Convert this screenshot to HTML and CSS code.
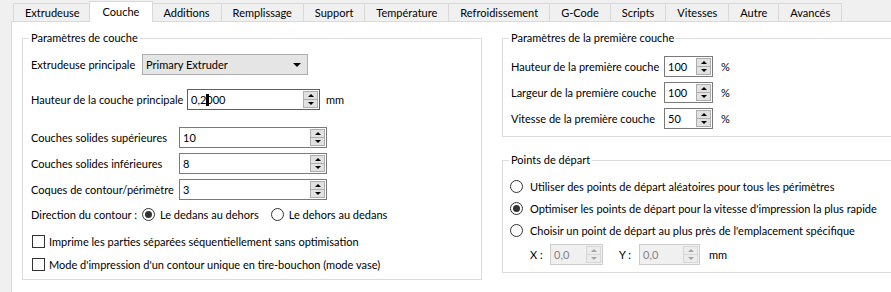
FILE: index.html
```html
<!DOCTYPE html>
<html lang="fr">
<head>
	<meta charset="UTF-8">
	<meta name="viewport" content="width=device-width, initial-scale=1.0">
	<title>Couche</title>
	<link rel="stylesheet" href="styles.css">
</head>
<body>
	<div class="tabs">
		<div class="tab">Extrudeuse</div>
		<div class="tab active">Couche</div>
		<div class="tab">Additions</div>
		<div class="tab">Remplissage</div>
		<div class="tab">Support</div>
		<div class="tab">Température</div>
		<div class="tab">Refroidissement</div>
		<div class="tab">G-Code</div>
		<div class="tab">Scripts</div>
		<div class="tab">Vitesses</div>
		<div class="tab">Autre</div>
		<div class="tab last">Avancés</div>
	</div>

	<div class="pane">
		<fieldset class="group group-main">
			<legend>Paramètres de couche</legend>

			<div class="row row-combo">
				<span class="lbl lbl-short">Extrudeuse principale</span>
				<div class="combo">
					<span class="combo-text">Primary Extruder</span>
					<span class="combo-arrow"></span>
				</div>
			</div>

			<div class="row row-height">
				<span class="lbl lbl-height">Hauteur de la couche principale</span>
				<div class="spin spin-height focus">
					<span class="val">0,2<span class="caret"></span>000</span>
					<span class="spin-btn"><i class="up"></i><i class="dn"></i></span>
				</div>
				<span class="unit">mm</span>
			</div>

			<div class="form-grid">
				<span class="lbl">Couches solides supérieures</span>
				<div class="spin spin-wide">
					<span class="val">10</span>
					<span class="spin-btn"><i class="up"></i><i class="dn"></i></span>
				</div>
				<span class="lbl">Couches solides inférieures</span>
				<div class="spin spin-wide">
					<span class="val">8</span>
					<span class="spin-btn"><i class="up"></i><i class="dn"></i></span>
				</div>
				<span class="lbl">Coques de contour/périmètre</span>
				<div class="spin spin-wide">
					<span class="val">3</span>
					<span class="spin-btn"><i class="up"></i><i class="dn"></i></span>
				</div>
			</div>

			<div class="row row-dir">
				<span class="lbl lbl-short">Direction du contour :</span>
				<span class="radio checked"><span class="dot"></span>Le dedans au dehors</span>
				<span class="radio radio-second"><span class="dot"></span>Le dehors au dedans</span>
			</div>

			<div class="row check check-first"><span class="box"></span>Imprime les parties séparées séquentiellement sans optimisation</div>
			<div class="row check"><span class="box"></span>Mode d'impression d'un contour unique en tire-bouchon (mode vase)</div>
		</fieldset>

		<div class="col-right">
			<fieldset class="group group-first">
				<legend>Paramètres de la première couche</legend>
				<div class="first-grid">
					<span class="lbl">Hauteur de la première couche</span>
					<div class="spin spin-small">
						<span class="val">100</span>
						<span class="spin-btn"><i class="up"></i><i class="dn"></i></span>
					</div>
					<span class="unit">%</span>

					<span class="lbl">Largeur de la première couche</span>
					<div class="spin spin-small">
						<span class="val">100</span>
						<span class="spin-btn"><i class="up"></i><i class="dn"></i></span>
					</div>
					<span class="unit">%</span>

					<span class="lbl">Vitesse de la première couche</span>
					<div class="spin spin-small">
						<span class="val">50</span>
						<span class="spin-btn"><i class="up"></i><i class="dn"></i></span>
					</div>
					<span class="unit">%</span>
				</div>
			</fieldset>

			<fieldset class="group group-start">
				<legend>Points de départ</legend>
				<div class="row radio-row first"><span class="radio"><span class="dot"></span>Utiliser des points de départ aléatoires pour tous les périmètres</span></div>
				<div class="row radio-row"><span class="radio checked"><span class="dot"></span>Optimiser les points de départ pour la vitesse d'impression la plus rapide</span></div>
				<div class="row radio-row"><span class="radio"><span class="dot"></span>Choisir un point de départ au plus près de l'emplacement spécifique</span></div>
				<div class="row xy-row">
					<span class="xy-lbl">X :</span>
					<div class="spin spin-x disabled">
						<span class="val">0,0</span>
						<span class="spin-btn"><i class="up"></i><i class="dn"></i></span>
					</div>
					<span class="xy-lbl xy-y">Y :</span>
					<div class="spin spin-y disabled">
						<span class="val">0,0</span>
						<span class="spin-btn"><i class="up"></i><i class="dn"></i></span>
					</div>
					<span class="unit">mm</span>
				</div>
			</fieldset>
		</div>
	</div>
</body>
</html>
```

FILE: styles.css
```css
body{
	margin: 0;
	background-color: #f0f0f0;
	font-family: Lato, "Segoe UI", sans-serif;
	font-size: 11px;
	color: #000;
	overflow: hidden;
	width: 891px;
	height: 292px;
}

/* tab bar */
.tabs{
	display: flex;
	align-items: flex-end;
	height: 21px;
	padding-left: 13px;
}
.tab{
	height: 17px;
	line-height: 17px;
	padding: 0 11px;
	border: 1px solid #d9d9d9;
	border-bottom: none;
	border-right: none;
	background-color: #f0f0f0;
	white-space: nowrap;
}
.tab.last{
	border-right: 1px solid #d9d9d9;
}
.tab.active{
	position: relative;
	z-index: 1;
	height: 20px;
	line-height: 19px;
	padding: 0 13px;
	margin: 0 -2px -1px;
	border-right: 1px solid #d9d9d9;
	background-color: #fff;
}

/* page */
.pane{
	display: flex;
	gap: 20px;
	margin-left: 11px;
	height: 271px;
	padding: 8px 0 0 10px;
	box-sizing: border-box;
	border-top: 1px solid #d9d9d9;
	border-left: 1px solid #d9d9d9;
	background-color: #fff;
	overflow: hidden;
}

.group{
	margin: 0;
	padding: 0 8px;
	border: 1px solid #dcdcdc;
	box-sizing: border-box;
	min-width: 0;
}
.group legend{
	line-height: 16px;
	padding: 0 2px;
	margin-left: -2px;
}
.group-main{
	width: 460px;
	flex: none;
	align-self: flex-start;
	padding-bottom: 4px;
}
.col-right{
	width: 400px;
	flex: none;
}

.row{
	display: flex;
	align-items: center;
	height: 21px;
	white-space: nowrap;
}
.lbl{
	white-space: nowrap;
}
.lbl-short{
	width: 111px;
	flex: none;
}
.lbl-height{
	width: 156px;
	flex: none;
}
.unit{
	margin-left: 6px;
}

.row-combo{
	margin-top: 8px;
}
.row-height{
	margin-top: 14px;
}

/* combo box */
.combo{
	display: flex;
	align-items: center;
	justify-content: space-between;
	width: 166px;
	height: 21px;
	box-sizing: border-box;
	padding: 0 6px 0 3px;
	background-color: #e5e5e5;
	border: 1px solid #adadad;
}
.combo-arrow{
	width: 0;
	height: 0;
	border-left: 4px solid transparent;
	border-right: 4px solid transparent;
	border-top: 4px solid #000;
}

/* spin box */
.spin{
	display: flex;
	height: 21px;
	box-sizing: border-box;
	padding: 1px;
	border: 1px solid #7a7a7a;
	background-color: #fff;
}
.spin.focus{
	border-color: #0078d7;
}
.spin .val{
	flex: 1;
	line-height: 17px;
	padding-left: 2px;
	white-space: nowrap;
}
.caret{
	display: inline-block;
	width: 3px;
	height: 12px;
	margin-right: -3px;
	background-color: #000;
	vertical-align: -2px;
}
.spin-btn{
	display: flex;
	flex-direction: column;
	width: 15px;
	box-sizing: border-box;
	border: 1px solid #adadad;
	background-color: #e1e1e1;
}
.spin-btn i{
	flex: 1;
	display: flex;
	align-items: center;
	justify-content: center;
}
.spin-btn .up{
	border-bottom: 1px solid #adadad;
}
.spin-btn .up::after,
.spin-btn .dn::after{
	content: "";
	width: 0;
	height: 0;
	border-left: 3px solid transparent;
	border-right: 3px solid transparent;
}
.spin-btn .up::after{
	border-bottom: 3px solid #000;
}
.spin-btn .dn::after{
	border-top: 3px solid #000;
}
.spin.disabled{
	border-color: #cccccc;
	background-color: #f0f0f0;
	color: #838383;
}
.spin.disabled .spin-btn{
	border-color: #d6d6d6;
	background-color: #ececec;
}
.spin.disabled .spin-btn .up{
	border-bottom-color: #d6d6d6;
}
.spin.disabled .spin-btn .up::after{
	border-bottom-color: #a3a3a3;
}
.spin.disabled .spin-btn .dn::after{
	border-top-color: #a3a3a3;
}

.spin-height{
	width: 133px;
}
.spin-wide{
	width: 148px;
}
.spin-small{
	width: 49px;
}
.spin-x{
	width: 53px;
}
.spin-y{
	width: 61px;
}

.form-grid{
	display: grid;
	grid-template-columns: 148px 148px;
	grid-auto-rows: 21px;
	row-gap: 5px;
	align-items: center;
	margin-top: 17px;
}

/* radio and check */
.radio{
	display: inline-flex;
	align-items: center;
	white-space: nowrap;
}
.radio .dot{
	display: flex;
	align-items: center;
	justify-content: center;
	width: 13px;
	height: 13px;
	box-sizing: border-box;
	margin-right: 5px;
	border: 1px solid #333;
	border-radius: 50%;
	background-color: #fff;
	flex: none;
}
.radio.checked .dot::after{
	content: "";
	width: 7px;
	height: 7px;
	border-radius: 50%;
	background-color: #333;
}
.radio-second{
	margin-left: 12px;
}
.row-dir{
	margin-top: 4px;
}

.check .box{
	width: 13px;
	height: 13px;
	box-sizing: border-box;
	margin: 0 4px 0 1px;
	border: 1px solid #333;
	background-color: #fff;
	flex: none;
}
.check-first{
	margin-top: 6px;
}
.check + .check{
	margin-top: 2px;
}

/* right column */
.group-first{
	padding-bottom: 7px;
}
.first-grid{
	display: grid;
	grid-template-columns: 153px 49px auto;
	grid-auto-rows: 21px;
	row-gap: 5px;
	align-items: center;
	margin-top: 10px;
	white-space: nowrap;
}
.first-grid .unit{
	margin-left: 8px;
}

.group-start{
	margin-top: 15px;
	padding-bottom: 7px;
}
.radio-row{
	height: 20px;
	margin-top: 2px;
	margin-left: -1px;
}
.radio-row.first{
	margin-top: 8px;
}
.radio-row .dot{
	margin-right: 7px;
}
.xy-row{
	margin-top: 4px;
	padding-left: 19px;
}
.xy-lbl{
	width: 20px;
	flex: none;
}
.xy-y{
	margin-left: 16px;
}
.xy-row .unit{
	margin-left: 9px;
}
```
